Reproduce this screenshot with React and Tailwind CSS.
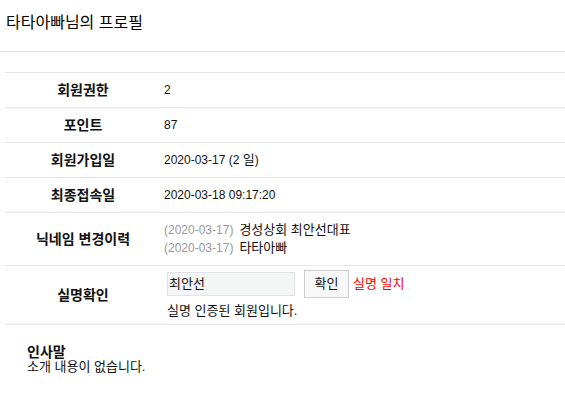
export default function App() {
  const font = "font-['Liberation_Sans','Noto_Sans_CJK_KR',sans-serif]";
  const rows = [
    { label: "회원권한", value: "2" },
    { label: "포인트", value: "87" },
    { label: "회원가입일", value: <>2020-03-17 (2 <span className="text-[13px]">일</span>)</> },
    { label: "최종접속일", value: "2020-03-18 09:17:20" },
  ];
  return (
    <div className={`w-[565px] h-[415px] bg-white text-[12px] text-[#111] ${font}`}>
      <div className="h-[52px] border-b border-[#dfe4e8] pl-[6px] pt-[13px]">
        <h1 className="text-[16px] leading-[20px] text-black">타타아빠님의 프로필</h1>
      </div>
      <div className="mt-[20px] ml-[5px] border-t border-[#e6e6e6]">
        {rows.map((r) => (
          <div key={r.label} className="flex h-[35px] items-center border-b border-[#e6e6e6]">
            <div className="w-[156px] text-center text-[14px] font-bold">{r.label}</div>
            <div className="pl-[3px]">{r.value}</div>
          </div>
        ))}
        <div className="flex h-[53px] items-center border-b border-[#e6e6e6]">
          <div className="w-[156px] text-center text-[14px] font-bold">닉네임 변경이력</div>
          <div className="pl-[3px] leading-[18px]">
            <div>
              <span className="text-[#999]">(2020-03-17)</span>
              <span className="ml-[6px] text-[13px]">경성상회 최안선대표</span>
            </div>
            <div>
              <span className="text-[#999]">(2020-03-17)</span>
              <span className="ml-[6px] text-[13px]">타타아빠</span>
            </div>
          </div>
        </div>
        <div className="flex h-[59px] items-center border-b border-[#e6e6e6]">
          <div className="w-[156px] text-center text-[14px] font-bold">실명확인</div>
          <div className="pl-[6px]">
            <div className="flex h-[28px] items-center">
              <div className="flex h-[24px] w-[128px] items-center border border-[#dfe3e5] bg-[#f4f5f5] pl-[1px] text-[13px]">
                최안선
              </div>
              <div className="ml-[9px] flex h-[28px] w-[45px] items-center justify-center border border-[#cccccc] bg-[#f8f8f8] text-[13px]">
                확인
              </div>
              <span className="ml-[4px] text-[13px] text-[#ff0000]">실명 일치</span>
            </div>
            <div className="mt-[4px] leading-[18px] text-[13px]">실명 인증된 회원입니다.</div>
          </div>
        </div>
      </div>
      <div className="pl-[27px] pt-[20px]">
        <div className="text-[14px] font-bold leading-[15px]">인사말</div>
        <div className="text-[13px] leading-[13px]">소개 내용이 없습니다.</div>
      </div>
    </div>
  );
}
